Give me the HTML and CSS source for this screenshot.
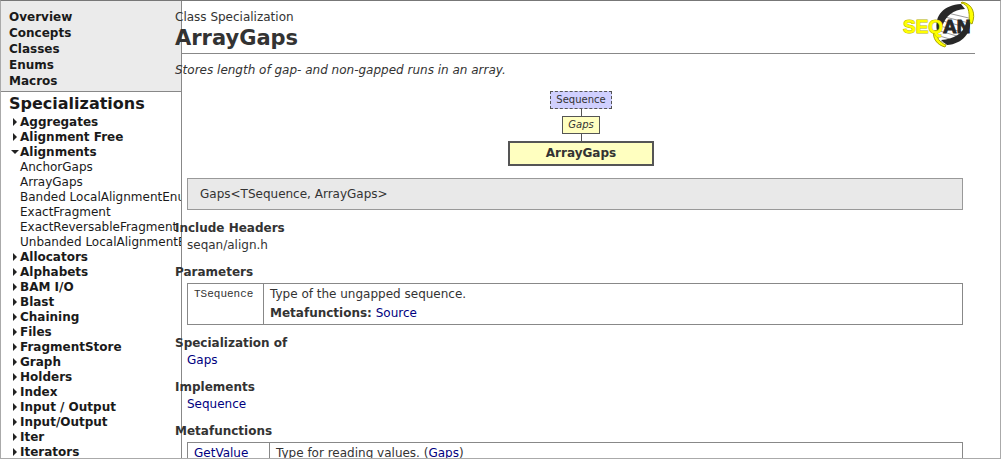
FILE: index.html
```
<!DOCTYPE html>
<html lang="en">
<head>
<meta charset="utf-8">
<title>ArrayGaps</title>
<link rel="stylesheet" href="styles.css">
</head>
<body>
<div class="page">
  <aside class="sidebar">
    <nav class="sections">
      <a href="#">Overview</a>
      <a href="#">Concepts</a>
      <a href="#">Classes</a>
      <a href="#">Enums</a>
      <a href="#">Macros</a>
    </nav>
    <h2 class="tree-title">Specializations</h2>
    <ul class="tree">
      <li class="node"><a href="#">Aggregates</a></li>
      <li class="node"><a href="#">Alignment Free</a></li>
      <li class="node open"><a href="#">Alignments</a>
        <ul class="leaves">
          <li><a href="#">AnchorGaps</a></li>
          <li><a href="#">ArrayGaps</a></li>
          <li><a href="#">Banded LocalAlignmentEnumerator</a></li>
          <li><a href="#">ExactFragment</a></li>
          <li><a href="#">ExactReversableFragment</a></li>
          <li><a href="#">Unbanded LocalAlignmentEnumerator</a></li>
        </ul>
      </li>
      <li class="node"><a href="#">Allocators</a></li>
      <li class="node"><a href="#">Alphabets</a></li>
      <li class="node"><a href="#">BAM I/O</a></li>
      <li class="node"><a href="#">Blast</a></li>
      <li class="node"><a href="#">Chaining</a></li>
      <li class="node"><a href="#">Files</a></li>
      <li class="node"><a href="#">FragmentStore</a></li>
      <li class="node"><a href="#">Graph</a></li>
      <li class="node"><a href="#">Holders</a></li>
      <li class="node"><a href="#">Index</a></li>
      <li class="node"><a href="#">Input / Output</a></li>
      <li class="node"><a href="#">Input/Output</a></li>
      <li class="node"><a href="#">Iter</a></li>
      <li class="node"><a href="#">Iterators</a></li>
    </ul>
  </aside>
  <main class="content">
    <header class="header">
      <div>
        <p class="kind">Class Specialization</p>
        <h1 class="title">ArrayGaps</h1>
      </div>
      <svg class="logo" viewBox="0 0 72 48" role="img" aria-label="SeqAn">
        <defs>
          <clipPath id="helix"><path d="M34 33 C33 18 42 7 60 5 C70 15 68 32 50 42 C43 44 36 43 34 33Z"/></clipPath>
        </defs>
        <g clip-path="url(#helix)">
          <path d="M30 0 H72 V48 H30Z" fill="#fff"/>
          <path d="M36 10 L70 18 M34 14 L70 23 M32 18 L70 28 M30 23 L66 33 M30 28 L64 38 M30 33 L60 42 M30 38 L56 46" fill="none" stroke="#999" stroke-width="1"/>
        </g>
        <path d="M34 30 C31 14 41 4 58 3 L62 8 C50 9 43 14 39 26Z" fill="#282828"/>
        <path d="M67 18 C69 31 60 43 44 44 L38 39 C51 38 60 33 63 22Z" fill="#282828"/>
        <path d="M58 2 C65 3 67 10 66 21 L69 23 C73 13 70 3 59 1Z" fill="#ff0" stroke="#a8a400" stroke-width="1"/>
        <path d="M35 29 C33 37 36 41 43 44 L42 46 C34 44 29 37 31 30Z" fill="#ff0" stroke="#a8a400" stroke-width="1"/>
        <text class="logo-text logo-seq" x="0" y="32">SEQ</text>
        <text class="logo-text logo-an" x="40" y="32">AN</text>
      </svg>
    </header>
    <p class="summary">Stores length of gap- and non-gapped runs in an array.</p>
    <div class="diagram">
      <a class="box concept" href="#">Sequence</a>
      <span class="link"></span>
      <a class="box base" href="#">Gaps</a>
      <span class="link"></span>
      <span class="box current">ArrayGaps</span>
    </div>
    <div class="signature">Gaps&lt;TSequence, ArrayGaps&gt;</div>
    <section class="block">
      <h3>Include Headers</h3>
      <p>seqan/align.h</p>
    </section>
    <section class="block">
      <h3>Parameters</h3>
      <table class="grid">
        <tr>
          <td class="param"><code>TSequence</code></td>
          <td><p>Type of the ungapped sequence.</p><p class="extra"><b>Metafunctions:</b> <a href="#">Source</a></p></td>
        </tr>
      </table>
    </section>
    <section class="block">
      <h3>Specialization of</h3>
      <p><a href="#">Gaps</a></p>
    </section>
    <section class="block">
      <h3>Implements</h3>
      <p><a href="#">Sequence</a></p>
    </section>
    <section class="block">
      <h3>Metafunctions</h3>
      <table class="grid">
        <tr>
          <td class="function"><a href="#">GetValue</a></td>
          <td>Type for reading values. (<a href="#">Gaps</a>)</td>
        </tr>
      </table>
    </section>
  </main>
</div>
</body>
</html>
```
FILE: styles.css
```
* { box-sizing: border-box; }
body { margin: 0; background: #fff; color: #333; font: 12px/16px "DejaVu Sans", sans-serif; }
h1, h2, h3, p, ul { margin: 0; padding: 0; }
ul { list-style: none; }
a { color: #000080; text-decoration: none; }

.page { display: flex; height: 100vh; overflow: hidden; border: 1px solid #aaa; border-top-color: #777; }

.sidebar { flex: none; width: 181px; overflow: hidden; border-right: 1px solid #888; white-space: nowrap; }
.sidebar a { color: #1a1a1a; }
.sections { display: flex; flex-direction: column; padding: 8px 8px 2px; background: #ebebeb; border-bottom: 1px solid #888; font-weight: bold; }
.tree-title { padding: 2px 8px 0; font-size: 16px; line-height: 20px; color: #1a1a1a; }
.tree { padding: 1px 0 0 19px; line-height: 15px; }
.node { position: relative; font-weight: bold; }
.node::before { content: ""; position: absolute; left: -7px; top: 3px; border: solid transparent; border-width: 4px 0 4px 4px; border-left-color: #222; }
.node.open::before { left: -9px; top: 5px; border-width: 4px 4px 0; border-color: #222 transparent transparent; }
.leaves { font-weight: normal; }

.content { position: relative; flex: 1; min-width: 0; margin-left: -7px; padding: 0 25px 0 0; }
.header { display: flex; justify-content: space-between; height: 53px; padding-top: 8px; background: linear-gradient(#888, #888) 7px 100% / 100% 1px no-repeat; }
.title { font-size: 21px; line-height: 26px; }
.logo { width: 72px; height: 48px; margin: -8px 0 0; overflow: visible; }
.logo-text { font: bold 19px "Liberation Sans", sans-serif; }
.logo-seq { fill: #ff0; stroke: #b8b400; stroke-width: 1px; paint-order: stroke; }
.logo-an { fill: #282828; stroke: #282828; stroke-width: 1px; }
.summary { padding-top: 8px; font-style: italic; }

.diagram { display: flex; flex-direction: column; align-items: center; margin: 13px 0 12px 12px; }
.box { border: 1px solid #555; background: #ffffc0; font-size: 10px; line-height: 16px; padding: 0 5px; color: #333; }
.concept { border-style: dashed; background: #d0d0ff; }
.base { font-style: italic; }
.current { width: 146px; border-width: 2px; padding: 2px 0 3px; text-align: center; font-size: 12px; font-weight: bold; }
.link { width: 1px; height: 7px; background: #555; }

.signature { margin: 0 12px 10px; padding: 7px 12px; border: 1px solid #999; background: #e9e9e9; }
.block { margin-bottom: 10px; }
.block h3 { font-size: 12px; line-height: 16px; }
.block > p { padding: 1px 12px; }
.grid { width: calc(100% - 24px); margin: 3px 12px 0; border-collapse: collapse; }
.grid td { border: 1px solid #888; padding: 2px 6px; vertical-align: top; }
.grid .param { width: 76px; padding-top: 1px; }
.function { width: 82px; }
.param code { font: 11px/14px "Liberation Mono", monospace; }
.extra { margin: 3px 0 1px; }
```
